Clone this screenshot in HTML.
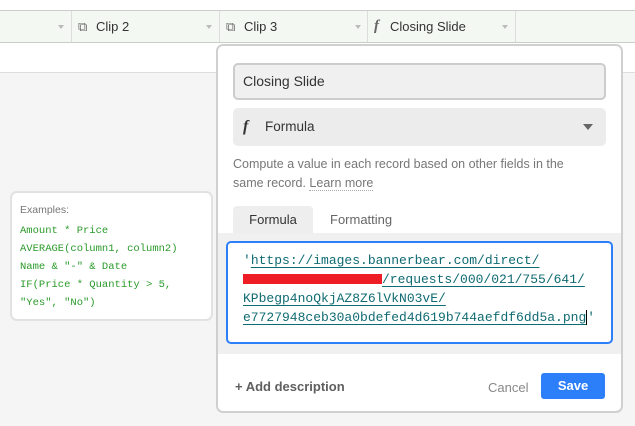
<!DOCTYPE html>
<html><head><style>
*{margin:0;padding:0;box-sizing:border-box}
body{width:635px;height:426px;overflow:hidden;background:#f5f5f5;font-family:"Liberation Sans",sans-serif;position:relative}
.abs{position:absolute}
.hdr{left:0;top:10px;width:635px;height:33px;background:#f4f8f2;border-top:1px solid #ccc;border-bottom:1px solid #ccc}
.col{position:absolute;top:0;height:31px;border-right:1px solid #ddd;font-size:13px;color:#333;line-height:31px}
.arr{position:absolute;top:14px;width:0;height:0;border-left:3px solid transparent;border-right:3px solid transparent;border-top:4px solid #bbb}
.mono{font-family:"Liberation Mono",monospace}
.u{color:#0f6b72;text-decoration:underline;text-decoration-color:#0f6b72;text-underline-offset:3px}
</style></head><body>
<div class="abs" style="left:0;top:0;width:635px;height:10px;background:#fff"></div>
<div class="abs hdr">
 <div class="col" style="left:0;width:72px"></div><div class="arr" style="left:58px"></div>
 <div class="col" style="left:72px;width:148px;padding-left:24px"><span style="position:absolute;left:6px;color:#666">⧉</span>Clip 2</div><div class="arr" style="left:206px"></div>
 <div class="col" style="left:220px;width:148px;padding-left:24px"><span style="position:absolute;left:6px;color:#666">⧉</span>Clip 3</div><div class="arr" style="left:355px"></div>
 <div class="col" style="left:368px;width:148px;padding-left:22px"><i style="position:absolute;left:6px;font-family:'Liberation Serif';font-weight:bold;color:#666;font-size:15px">f</i>Closing Slide</div><div class="arr" style="left:502px"></div>
</div>
<div class="abs" style="left:0;top:43px;width:635px;height:30px;background:#fff;border-bottom:1px solid #ddd"></div>

<div class="abs" style="left:10px;top:191px;width:203px;height:130px;background:#fff;border:2px solid #e2e2e2;border-radius:7px;padding:10px 8px">
 <div style="font-size:10.5px;color:#777;margin-top:1px">Examples:</div>
 <div class="mono" style="font-size:10.5px;color:#2a9a2a;line-height:18px;margin-top:6px">Amount * Price<br>AVERAGE(column1, column2)<br>Name &amp; "-" &amp; Date<br>IF(Price * Quantity &gt; 5,<br>"Yes", "No")</div>
</div>

<div class="abs" style="left:216px;top:44px;width:407px;height:369px;background:#fff;border:2px solid #d0d0d0;border-radius:7px">
 <div class="abs" style="left:15px;top:17px;width:373px;height:37px;background:#f0f0f0;border:2px solid #ccc;border-radius:5px;font-size:14px;color:#333;line-height:33px;padding-left:8px">Closing Slide</div>
 <div class="abs" style="left:15px;top:62px;width:373px;height:38px;background:#ececec;border-radius:5px;font-size:13.5px;color:#333;line-height:38px;padding-left:32px"><i style="position:absolute;left:10px;font-family:'Liberation Serif';font-weight:bold;font-size:16px">f</i>Formula<div style="position:absolute;right:13px;top:16px;border-left:5px solid transparent;border-right:5px solid transparent;border-top:6px solid #666"></div></div>
 <div class="abs" style="left:15px;top:109px;width:350px;font-size:12.5px;color:#777;line-height:19px">Compute a value in each record based on other fields in the same record. <span style="border-bottom:1px dotted #aaa">Learn more</span></div>
 <div class="abs" style="left:15px;top:160px;width:80px;height:28px;background:#eee;border-radius:4px 4px 0 0;font-size:13px;color:#333;text-align:center;line-height:28px">Formula</div>
 <div class="abs" style="left:112px;top:160px;font-size:13px;color:#666;line-height:28px">Formatting</div>
 <div class="abs" style="left:0;top:187px;width:403px;height:121px;background:#f0f0f0"></div>
 <div class="abs" style="left:8px;top:195px;width:387px;height:103px;background:#fff;border:2px solid #2d7ff9;border-radius:5px"></div>
 <div class="abs mono" style="left:25px;top:205px;font-size:13px;line-height:19px;color:#0f6b72;white-space:pre">'<span class="u">https://images.bannerbear.com/direct/</span>
<span class="u"><span style="display:inline-block;width:139px"></span>/requests/000/021/755/641/</span>
<span class="u">KPbegp4noQkjAZ8Z6lVkN03vE/</span>
<span class="u">e7727948ceb30a0bdefed4d619b744aefdf6dd5a.png</span><span style="border-left:1px solid #000">'</span></div>
 <div class="abs" style="left:25px;top:228px;width:139px;height:10px;background:#ee1c25"></div>
 <div class="abs" style="left:17px;top:333px;font-size:13px;color:#444;font-weight:bold;opacity:.85">+ Add description</div>
 <div class="abs" style="left:270px;top:334px;font-size:13px;color:#888">Cancel</div>
 <div class="abs" style="left:323px;top:327px;width:64px;height:26px;background:#2d7ff9;border-radius:3px;color:#fff;font-size:13px;font-weight:bold;text-align:center;line-height:26px">Save</div>
</div>
</body></html>
